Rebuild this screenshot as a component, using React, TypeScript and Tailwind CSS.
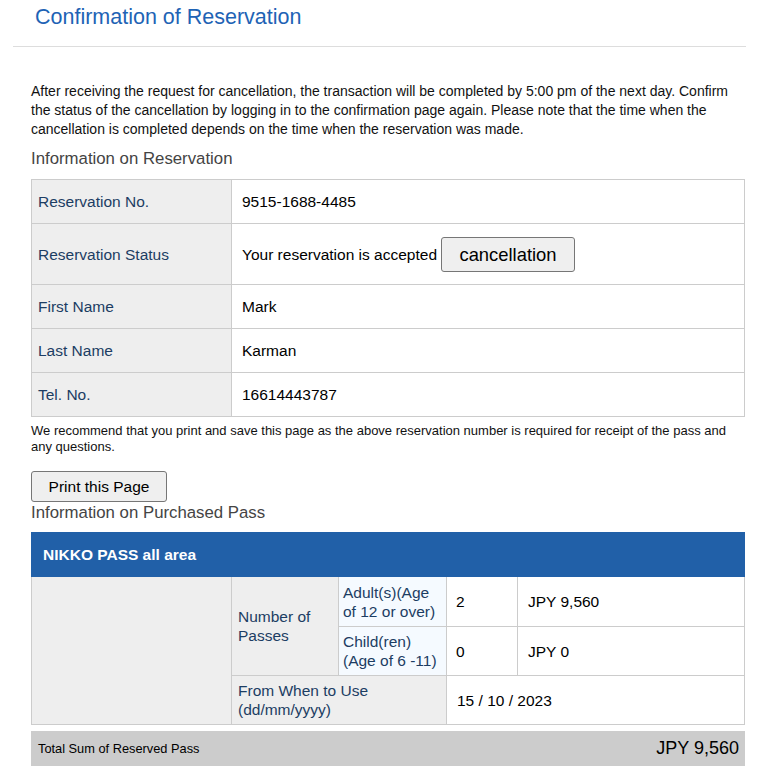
const font = { fontFamily: '"Liberation Sans", Arial, sans-serif' };

const rows = [
  { label: "Reservation No.", value: "9515-1688-4485" },
  { label: "Reservation Status", value: "status" },
  { label: "First Name", value: "Mark" },
  { label: "Last Name", value: "Karman" },
  { label: "Tel. No.", value: "16614443787" },
];

export default function App() {
  return (
    <div className="bg-white text-black min-h-[779px]" style={font}>
      {/* title */}
      <div className="px-[13px]">
        <h1 className="pl-[22px] pt-[4px] h-[46px] text-[21.5px] leading-[26px] text-[#1e63b5]">
          Confirmation of Reservation
        </h1>
        <div className="border-t border-[#dddddd] w-[733px]" />
      </div>

      <div className="ml-[31px] w-[714px]">
        <p className="mt-[35px] text-[14px] leading-[19px] text-[#111] whitespace-nowrap">
          After receiving the request for cancellation, the transaction will be completed by 5:00 pm of the next day. Confirm
          <br />
          the status of the cancellation by logging in to the confirmation page again. Please note that the time when the
          <br />
          cancellation is completed depends on the time when the reservation was made.
        </p>
        <h2 className="mt-[10px] text-[16.8px] leading-[20px] text-[#444]">Information on Reservation</h2>

        {/* reservation table */}
        <table className="mt-[10px] w-[714px] border-collapse text-[15.5px] leading-[19px]">
          <tbody>
            {rows.map((r) => (
              <tr key={r.label} className={r.value === "status" ? "h-[61px]" : "h-[44px]"}>
                <td className="w-[200px] border border-[#cccccc] bg-[#eeeeee] px-[6px] text-[#1c3d63]">{r.label}</td>
                <td className="border border-[#cccccc] px-[10px]">
                  {r.value === "status" ? (
                    <div className="flex items-center gap-[4px]">
                      <span>Your reservation is accepted</span>
                      <button className="h-[35px] w-[134px] text-[18.4px] bg-[#efefef] border border-[#767676] rounded-[3px]">
                        cancellation
                      </button>
                    </div>
                  ) : (
                    r.value
                  )}
                </td>
              </tr>
            ))}
          </tbody>
        </table>

        <p className="mt-[6px] text-[13px] leading-[16px] text-[#111]">
          We recommend that you print and save this page as the above reservation number is required for receipt of the pass and
          <br />
          any questions.
        </p>
        <button className="mt-[16px] h-[31px] w-[136px] text-[15.5px] bg-[#efefef] border border-[#767676] rounded-[3px] block">
          Print this Page
        </button>
        <h2 className="mt-[1px] text-[16.8px] leading-[19px] text-[#444]">Information on Purchased Pass</h2>

        {/* pass table */}
        <table className="mt-[10px] w-[714px] border-collapse text-[15.5px] leading-[19px]">
          <tbody>
            <tr className="h-[44px]">
              <td colSpan={5} className="bg-[#2160a8] border border-[#2160a8] px-[11px] text-white font-bold">
                NIKKO PASS all area
              </td>
            </tr>
            <tr className="h-[50px]">
              <td rowSpan={3} className="w-[200px] bg-[#eeeeee] border border-[#cccccc]" />
              <td rowSpan={2} className="w-[107px] bg-[#eeeeee] border border-[#cccccc] px-[6px] text-[#1c3d63]">
                Number of Passes
              </td>
              <td className="w-[108px] bg-[#f5faff] border border-[#cccccc] px-[4px] text-[#1c3d63]">
                Adult(s)(Age of 12 or over)
              </td>
              <td className="w-[71px] border border-[#cccccc] px-[9px]">2</td>
              <td className="border border-[#cccccc] px-[10px]">JPY 9,560</td>
            </tr>
            <tr className="h-[49px]">
              <td className="bg-[#f5faff] border border-[#cccccc] px-[4px] text-[#1c3d63]">
                Child(ren) (Age of 6 -11)
              </td>
              <td className="border border-[#cccccc] px-[9px]">0</td>
              <td className="border border-[#cccccc] px-[10px]">JPY 0</td>
            </tr>
            <tr className="h-[49px]">
              <td colSpan={2} className="bg-[#eeeeee] border border-[#cccccc] px-[6px] text-[#1c3d63]">
                From When to Use
                <br />
                (dd/mm/yyyy)
              </td>
              <td colSpan={2} className="border border-[#cccccc] px-[10px]">15 / 10 / 2023</td>
            </tr>
          </tbody>
        </table>

        <div className="mt-[6px] w-[714px] h-[35px] bg-[#cccccc] flex items-center justify-between pl-[7px] pr-[6px]">
          <span className="text-[12.8px]">Total Sum of Reserved Pass</span>
          <span className="text-[18px]">JPY 9,560</span>
        </div>
      </div>
    </div>
  );
}
